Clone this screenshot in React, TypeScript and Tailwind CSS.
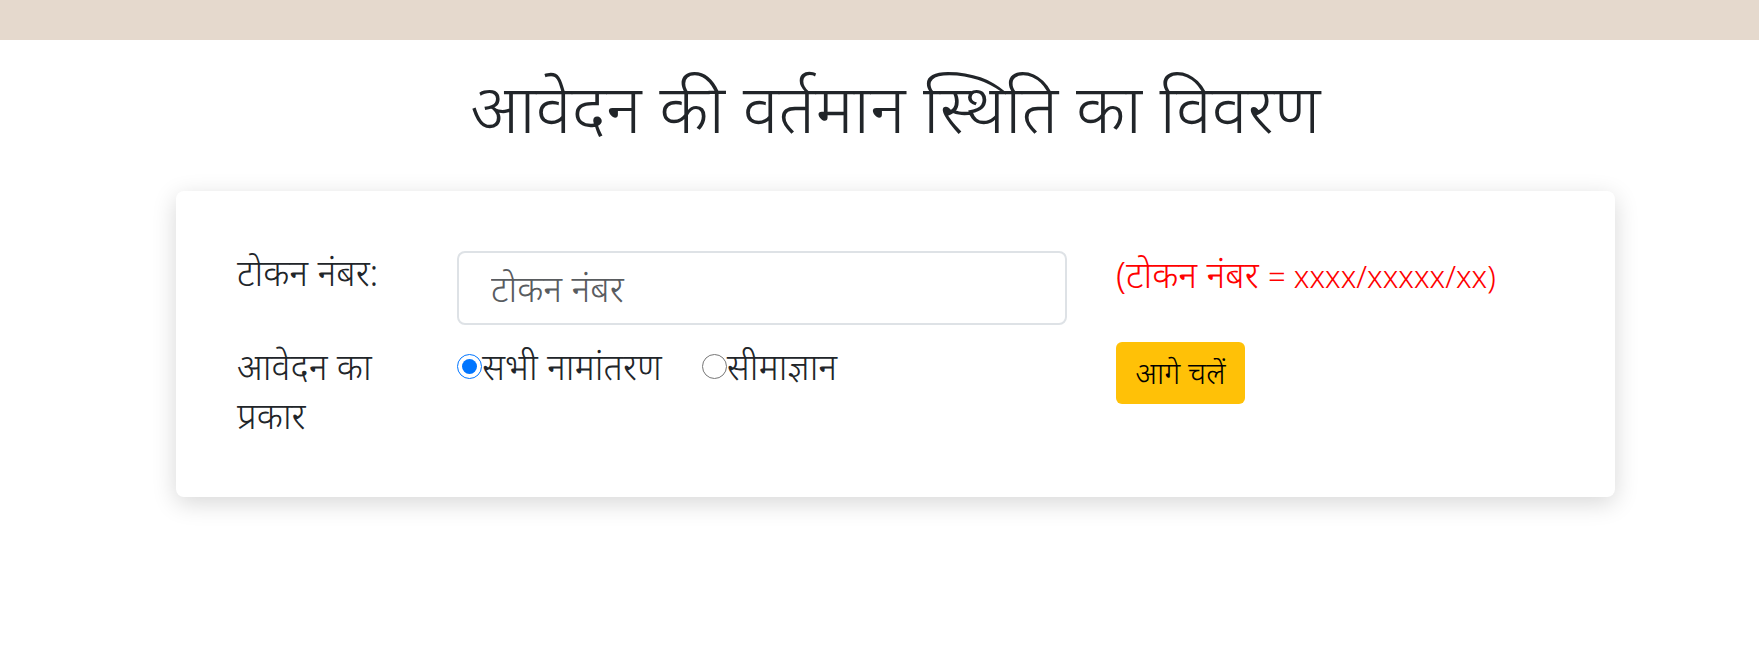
import { useState } from "react";

export default function App() {
  const [token, setToken] = useState("");
  const [kind, setKind] = useState("all");

  return (
    <div className="min-h-screen bg-white text-[#212529] font-['Noto_Sans',sans-serif] font-[350]">
      {/* top strip */}
      <div className="h-[40px] bg-[#e5d9cd]" />

      <div className="w-[1439px] ml-[176px]">
        <h1 className="text-center text-[68px] leading-[80px] pt-[27px] pb-[44px] font-[350]">
          आवेदन की वर्तमान स्थिति का विवरण
        </h1>

        {/* form card */}
        <div className="bg-white rounded-lg shadow-[0_6px_24px_rgba(0,0,0,0.16)] pl-[61px] pr-[60px] pt-[60px] pb-[57px] text-[36px] leading-[49px]">
          <div className="flex items-start">
            <label className="w-[220px] shrink-0 leading-[44px]">टोकन नंबर:</label>
            <input
              type="text"
              value={token}
              onChange={(e) => setToken(e.target.value)}
              placeholder="टोकन नंबर"
              className="w-[610px] h-[74px] rounded-lg border-2 border-[#dee2e6] px-[32px] text-[36px] font-[350] placeholder:text-[#595c5f] focus:outline-none"
            />
            <span className="ml-[49px] text-[#ff0000] leading-[48px]">
              (टोकन नंबर <span className="text-[31px]">= xxxx/xxxxx/xx)</span>
            </span>
          </div>

          <div className="flex items-start mt-[17px]">
            <div className="w-[220px] shrink-0 pr-[50px]">आवेदन का प्रकार</div>
            <div className="w-[610px] flex items-center gap-[40px]">
              <label className="flex items-center">
                <input
                  type="radio"
                  name="kind"
                  checked={kind === "all"}
                  onChange={() => setKind("all")}
                  className="w-[25px] h-[25px] m-0"
                />
                <span>सभी नामांतरण</span>
              </label>
              <label className="flex items-center">
                <input
                  type="radio"
                  name="kind"
                  checked={kind === "sima"}
                  onChange={() => setKind("sima")}
                  className="w-[25px] h-[25px] m-0"
                />
                <span>सीमाज्ञान</span>
              </label>
            </div>
            <button className="ml-[49px] h-[62px] w-[129px] rounded-md bg-[#ffc107] text-black text-[30px] font-[350] leading-[62px]">
              आगे चलें
            </button>
          </div>
        </div>
      </div>
    </div>
  );
}
